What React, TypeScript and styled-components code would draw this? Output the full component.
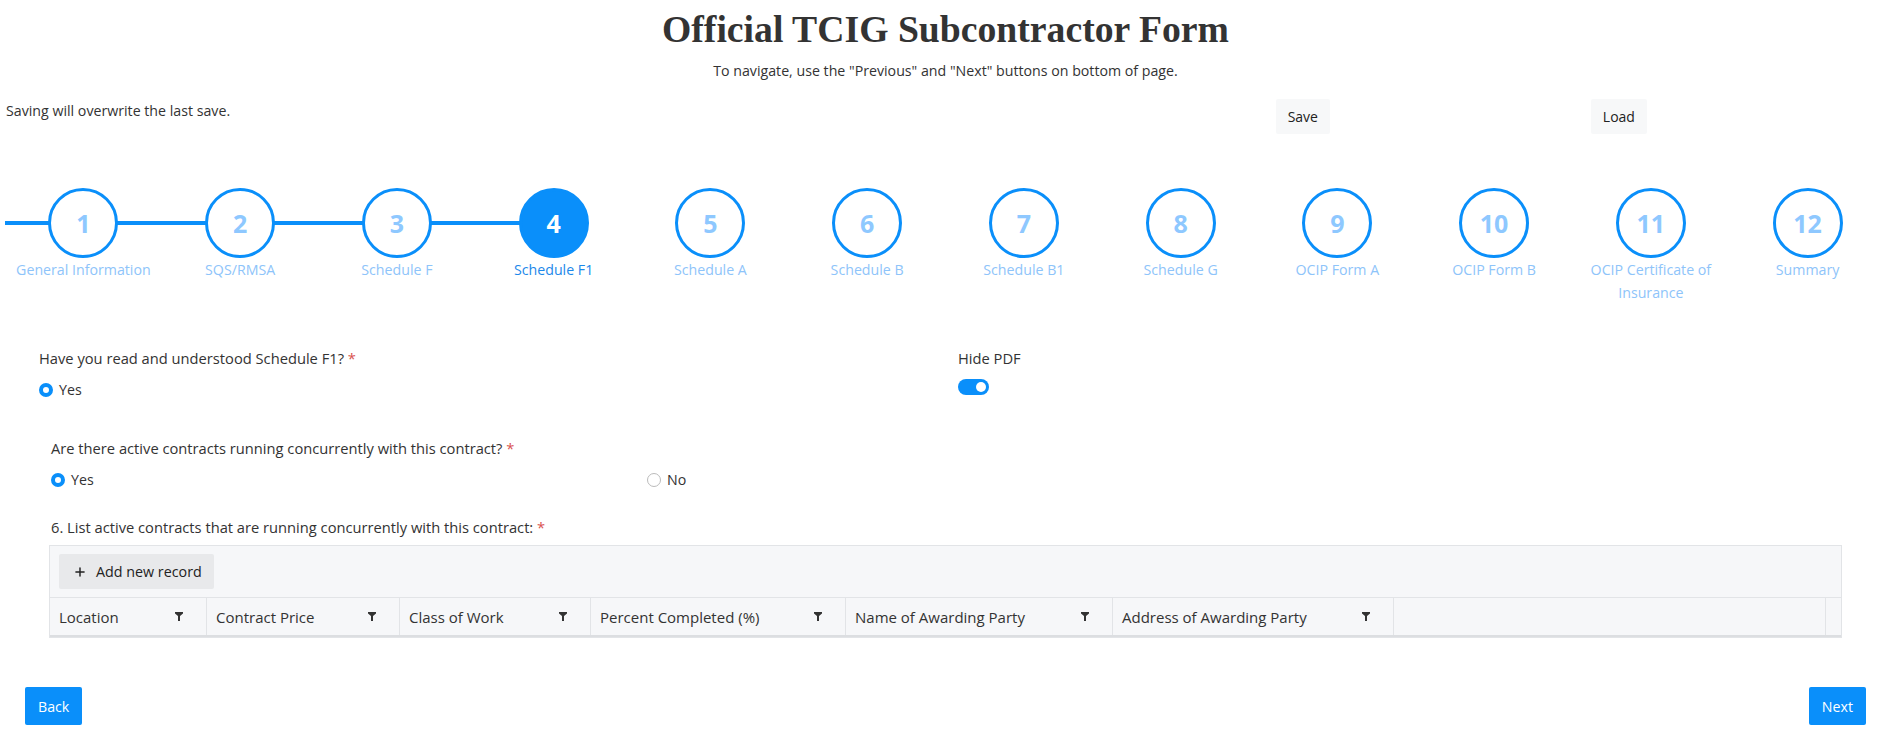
import React, { useState } from 'react';
import styled, { createGlobalStyle, css } from 'styled-components';
import { Plus } from 'lucide-react';

const GlobalStyle = createGlobalStyle`
  body {
    margin: 0;
    font-family: 'Open Sans', 'Noto Sans', sans-serif;
    font-size: 14px;
    color: #333;
    background: #fff;
  }
  * { box-sizing: border-box; }
`;

const Page = styled.div`
  padding: 0 5px;
`;

const Title = styled.h1`
  margin: 6px 0 0;
  text-align: center;
  font-family: 'Liberation Serif', 'Times New Roman', serif;
  font-weight: 700;
  font-size: 37.7px;
  line-height: 46px;
  color: #333;
`;

const Subtitle = styled.p`
  margin: 9px 0 0;
  text-align: center;
  font-size: 14.2px;
  line-height: 20px;
`;

const SaveRow = styled.div`
  display: grid;
  grid-template-columns: 4fr 1fr 1fr;
  margin: 18px -5px 0;
`;

const SaveNote = styled.div`
  padding: 1px 0 0 6px;
  font-size: 14.2px;
  line-height: 21px;
`;

const SaveCell = styled.div`
  padding-left: 15px;
`;

const LightButton = styled.button`
  height: 35px;
  padding: 0 12px;
  border: none;
  border-radius: 2px;
  background: #f7f8f9;
  color: #222;
  font-family: inherit;
  font-size: 14px;
`;

const Stepper = styled.div`
  display: grid;
  grid-template-columns: repeat(12, 1fr);
  margin-top: 54px;
`;

const line = css`
  content: '';
  position: absolute;
  top: 33px;
  height: 4px;
  background: #0a8ffa;
  z-index: 0;
`;

const Step = styled.div<{ $left: boolean; $right: boolean }>`
  position: relative;
  display: flex;
  flex-direction: column;
  align-items: center;
  ${({ $left }) =>
    $left &&
    css`
      &::before {
        ${line};
        left: 0;
        right: 50%;
      }
    `}
  ${({ $right }) =>
    $right &&
    css`
      &::after {
        ${line};
        left: 50%;
        right: 0;
      }
    `}
`;

const Circle = styled.div<{ $active: boolean }>`
  position: relative;
  z-index: 1;
  width: 70px;
  height: 70px;
  border-radius: 50%;
  border: 3px solid #0a8ffa;
  background: ${({ $active }) => ($active ? '#0a8ffa' : '#fff')};
  color: ${({ $active }) => ($active ? '#fff' : '#8ec8ff')};
  display: flex;
  align-items: center;
  justify-content: center;
  font-weight: 700;
  font-size: 25px;
`;

const StepLabel = styled.div<{ $active: boolean }>`
  width: 150px;
  text-align: center;
  font-size: 14.2px;
  line-height: 23px;
  color: ${({ $active }) => ($active ? '#1c88ea' : '#8ec4fa')};
`;

const Section = styled.div`
  display: grid;
  grid-template-columns: 919px 1fr;
  margin-top: 44px;
  padding-left: 34px;
`;

const Question = styled.div`
  font-size: 14.7px;
  font-weight: 500;
  line-height: 21px;
  color: #333;
`;

const Req = styled.span`
  color: #d9534f;
`;

const RadioRow = styled.div<{ $cols?: string }>`
  display: grid;
  grid-template-columns: ${({ $cols }) => $cols || 'auto'};
  justify-content: start;
  margin-top: 10px;
`;

const RadioItem = styled.label`
  display: flex;
  align-items: center;
  gap: 6px;
  font-size: 14.2px;
  line-height: 21px;
`;

const RadioDot = styled.span<{ $checked: boolean }>`
  width: 14px;
  height: 14px;
  border-radius: 50%;
  ${({ $checked }) =>
    $checked
      ? css`
          border: 4px solid #0a8ffa;
          background: #fff;
        `
      : css`
          border: 1px solid #bbb;
          background: #fff;
        `}
`;

const Toggle = styled.div<{ $on: boolean }>`
  margin-top: 10px;
  width: 31px;
  height: 16px;
  border-radius: 8px;
  background: ${({ $on }) => ($on ? '#0a8ffa' : '#ccc')};
  display: flex;
  align-items: center;
  justify-content: ${({ $on }) => ($on ? 'flex-end' : 'flex-start')};
  padding: 0 3px;
  &::after {
    content: '';
    width: 10px;
    height: 10px;
    border-radius: 50%;
    background: #fff;
  }
`;

const SubSection = styled.div`
  padding-left: 46px;
  margin-top: 38px;
`;

const ListSection = styled.div`
  padding-left: 46px;
  margin-top: 27px;
  padding-right: 44px;
`;

const Grid = styled.div`
  margin: 7px 0 0 -2px;
  border: 1px solid #e2e4e7;
  background: #f6f7f9;
`;

const GridToolbar = styled.div`
  padding: 8px 9px;
  border-bottom: 1px solid #e2e4e7;
`;

const AddButton = styled.button`
  display: inline-flex;
  align-items: center;
  gap: 9px;
  height: 35px;
  padding: 0 12px 0 14px;
  border: none;
  border-radius: 2px;
  background: #e8e9eb;
  color: #222;
  font-family: inherit;
  font-size: 14.3px;
`;

const HeaderRow = styled.div`
  display: grid;
  grid-template-columns: 156px 193px 191px 255px 267px 281px 1fr 16px;
  height: 39px;
  border-bottom: 2px solid #dcdee1;
`;

const HeaderCell = styled.div`
  display: flex;
  align-items: center;
  justify-content: space-between;
  padding: 0 23px 0 9px;
  border-left: 1px solid #e2e4e7;
  font-size: 15px;
  color: #333;
  &:first-child {
    border-left: none;
  }
`;

const Footer = styled.div`
  display: flex;
  justify-content: space-between;
  padding: 0 20px;
  margin-top: 49px;
`;

const PrimaryButton = styled.button`
  height: 38px;
  padding: 0 13px;
  border: none;
  border-radius: 2px;
  background: #0a8ffa;
  color: #fff;
  font-family: inherit;
  font-size: 14.2px;
`;

const FilterIcon = () => (
  <svg width="8" height="9" viewBox="0 0 8 9">
    <path d="M0 0h8v1.5L5 4v5H3V4L0 1.5z" fill="#333" />
  </svg>
);

const steps = [
  'General Information',
  'SQS/RMSA',
  'Schedule F',
  'Schedule F1',
  'Schedule A',
  'Schedule B',
  'Schedule B1',
  'Schedule G',
  'OCIP Form A',
  'OCIP Form B',
  'OCIP Certificate of Insurance',
  'Summary',
];

const columns = [
  'Location',
  'Contract Price',
  'Class of Work',
  'Percent Completed (%)',
  'Name of Awarding Party',
  'Address of Awarding Party',
];

const App = () => {
  const active = 3;
  const [hidePdf, setHidePdf] = useState(true);
  const [concurrent, setConcurrent] = useState(true);

  return (
    <Page>
      <GlobalStyle />
      <Title>Official TCIG Subcontractor Form</Title>
      <Subtitle>To navigate, use the "Previous" and "Next" buttons on bottom of page.</Subtitle>

      <SaveRow>
        <SaveNote>Saving will overwrite the last save.</SaveNote>
        <SaveCell>
          <LightButton>Save</LightButton>
        </SaveCell>
        <SaveCell>
          <LightButton>Load</LightButton>
        </SaveCell>
      </SaveRow>

      <Stepper>
        {steps.map((label, i) => (
          <Step key={label} $left={i <= active} $right={i < active}>
            <Circle $active={i === active}>{i + 1}</Circle>
            <StepLabel $active={i === active}>{label}</StepLabel>
          </Step>
        ))}
      </Stepper>

      <Section>
        <div>
          <Question>
            Have you read and understood Schedule F1? <Req>*</Req>
          </Question>
          <RadioRow>
            <RadioItem>
              <RadioDot $checked />
              Yes
            </RadioItem>
          </RadioRow>
        </div>
        <div>
          <Question>Hide PDF</Question>
          <Toggle $on={hidePdf} onClick={() => setHidePdf(!hidePdf)} />
        </div>
      </Section>

      <SubSection>
        <Question>
          Are there active contracts running concurrently with this contract? <Req>*</Req>
        </Question>
        <RadioRow $cols="596px auto">
          <RadioItem onClick={() => setConcurrent(true)}>
            <RadioDot $checked={concurrent} />
            Yes
          </RadioItem>
          <RadioItem onClick={() => setConcurrent(false)}>
            <RadioDot $checked={!concurrent} />
            No
          </RadioItem>
        </RadioRow>
      </SubSection>

      <ListSection>
        <Question>
          6. List active contracts that are running concurrently with this contract: <Req>*</Req>
        </Question>
        <Grid>
          <GridToolbar>
            <AddButton>
              <Plus size={14} strokeWidth={2.5} />
              Add new record
            </AddButton>
          </GridToolbar>
          <HeaderRow>
            {columns.map((c) => (
              <HeaderCell key={c}>
                {c}
                <FilterIcon />
              </HeaderCell>
            ))}
            <HeaderCell />
            <HeaderCell />
          </HeaderRow>
        </Grid>
      </ListSection>

      <Footer>
        <PrimaryButton>Back</PrimaryButton>
        <PrimaryButton>Next</PrimaryButton>
      </Footer>
    </Page>
  );
};

export default App;
